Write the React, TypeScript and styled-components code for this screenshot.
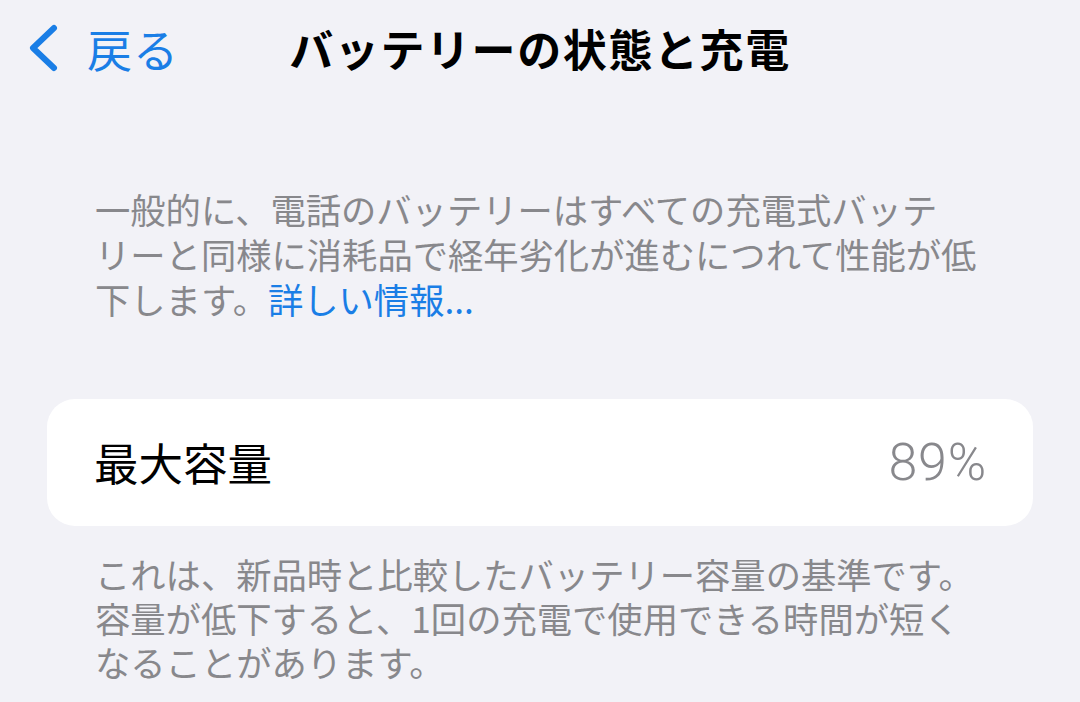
import React from "react";
import styled, { createGlobalStyle } from "styled-components";

const GlobalStyle = createGlobalStyle`
  html, body {
    margin: 0;
    padding: 0;
    background: #f2f2f7;
  }
  body {
    font-family: "Noto Sans CJK JP", "Noto Sans", sans-serif;
    -webkit-font-smoothing: antialiased;
  }
`;

const BLUE = "#1a7ee6";
const GREY = "#88888c";

export default function App() {
  return (
    <>
      <GlobalStyle />
      <Page>
        <Header>
          <BackButton>
            <svg width="36" height="50" viewBox="0 0 36 50" fill="none">
              <path
                d="M30 5 L9 25 L30 45"
                stroke={BLUE}
                strokeWidth="6"
                strokeLinecap="round"
                strokeLinejoin="round"
              />
            </svg>
            <span>戻る</span>
          </BackButton>
          <Title>バッテリーの状態と充電</Title>
          <div />
        </Header>

        <Note $top={86}>
          一般的に、電話のバッテリーはすべての充電式バッテ
          <br />
          リーと同様に消耗品で経年劣化が進むにつれて性能が低
          <br />
          下します。<Link>詳しい情報...</Link>
        </Note>

        <Card>
          <Label>最大容量</Label>
          <Value>89%</Value>
        </Card>

        <Note $top={26} $lineHeight={44}>
          これは、新品時と比較したバッテリー容量の基準です。
          <br />
          容量が低下すると、1回の充電で使用できる時間が短く
          <br />
          なることがあります。
        </Note>
      </Page>
    </>
  );
}

const Page = styled.div`
  width: 1080px;
  height: 702px;
  overflow: hidden;
  display: flex;
  flex-direction: column;
`;

const Header = styled.header`
  height: 100px;
  display: grid;
  grid-template-columns: 1fr auto 1fr;
  align-items: center;
`;

const BackButton = styled.div`
  display: flex;
  align-items: center;
  gap: 27px;
  padding-left: 24px;
  color: ${BLUE};
  font-size: 45px;
  margin-top: -4px;

  svg {
    flex: none;
  }

  span {
    line-height: 1;
    letter-spacing: 1px;
  }
`;

const Title = styled.h1`
  margin: 0 0 4px;
  font-size: 44px;
  font-weight: 700;
  color: #000;
  letter-spacing: 1.6px;
  line-height: 1;
`;

const Note = styled.p<{ $top: number; $lineHeight?: number }>`
  margin: ${(p) => p.$top}px 0 0;
  padding: 0 0 0 95px;
  font-size: 35.3px;
  line-height: ${(p) => p.$lineHeight ?? 45}px;
  color: ${GREY};
  white-space: nowrap;
`;

const Link = styled.span`
  color: ${BLUE};
`;

const Card = styled.div`
  margin: 78px 47px 0;
  height: 127px;
  background: #fff;
  border-radius: 28px;
  display: flex;
  align-items: center;
  justify-content: space-between;
  padding: 0 46px 0 47px;
`;

const Label = styled.span`
  font-size: 44.5px;
  color: #000;
  line-height: 1;
`;

const Value = styled.span`
  font-size: 52px;
  font-weight: 300;
  color: ${GREY};
  line-height: 1;
  letter-spacing: 0.8px;
  font-family: Roboto, "Noto Sans", sans-serif;
`;
